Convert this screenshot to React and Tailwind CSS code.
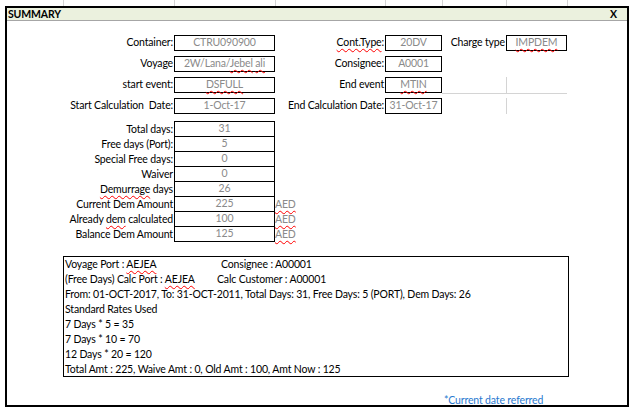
import React from "react";

const Wavy = ({ children }) => (
  <span className="underline decoration-wavy decoration-[#ff0000] decoration-1 underline-offset-[2px]">
    {children}
  </span>
);

const Label = ({ children, className = "" }) => (
  <div className={"flex items-center justify-end pr-[1px] whitespace-pre " + className}>
    <span>{children}</span>
  </div>
);

const Box = ({ children }) => (
  <div className="flex items-center justify-center border border-black text-[#8a8a8a] whitespace-pre">
    <span>{children}</span>
  </div>
);

export default function App() {
  const tableRows = [
    ["Total days:", "31", false],
    ["Free days (Port):", "5", false],
    ["Special Free days:", "0", false],
    ["Waiver", "0", false],
    [<><Wavy>Demurrage</Wavy>{" days"}</>, "26", false],
    ["Current Dem Amount", "225", true],
    [<>{"Already "}<Wavy>dem</Wavy>{" calculated"}</>, "100", true],
    ["Balance Dem Amount", "125", true],
  ];

  return (
    <div className="w-[635px] h-[413px] bg-white text-[10.5px] tracking-[-0.15px] leading-none text-black [font-family:Lato,'Open_Sans',sans-serif]">
      {/* spreadsheet gridlines above the box */}
      <div className="flex h-[6px]">
        <div className="w-[64px] border-r border-[#d4d4d4]" />
        <div className="w-[111px] border-r border-[#d4d4d4]" />
        <div className="w-[101px] border-r border-[#d4d4d4]" />
        <div className="w-[110px] border-r border-[#d4d4d4]" />
        <div className="w-[57px] border-r border-[#d4d4d4]" />
        <div className="w-[64px] border-r border-[#d4d4d4]" />
        <div className="w-[61px] border-r border-[#d4d4d4]" />
      </div>

      <div className="ml-[5px] w-[624px] h-[401px] border-2 border-black flex flex-col">
        {/* title bar */}
        <div className="h-[14px] bg-[#ebf1de] border-b border-[#a6a6a6] flex items-center justify-between pl-[1px] pr-[10px] font-bold">
          <span>SUMMARY</span>
          <span>X</span>
        </div>

        {/* header fields */}
        <div className="mt-[14px] grid grid-cols-[167px_101px_110px_57px_64px_61px] auto-rows-[16px] gap-y-[5px]">
          <Label>Container:</Label>
          <Box>CTRU090900</Box>
          <Label><Wavy>Cont.Type</Wavy>:</Label>
          <Box>20DV</Box>
          <Label>Charge type</Label>
          <Box><Wavy>IMPDEM</Wavy></Box>

          <Label>Voyage</Label>
          <Box>{"2W/Lana/"}<Wavy>Jebel</Wavy>{" "}<Wavy>ali</Wavy></Box>
          <Label>Consignee:</Label>
          <Box>A0001</Box>
          <div />
          <div />

          <Label>start event:</Label>
          <Box><Wavy>DSFULL</Wavy></Box>
          <Label>End event</Label>
          <Box><Wavy>MTIN</Wavy></Box>
          <div className="border-b border-[#d4d4d4] mb-[-1px]" />
          <div className="border-b border-l border-[#d4d4d4] mb-[-1px]" />

          <Label>{"Start Calculation  Date:"}</Label>
          <Box>1-Oct-17</Box>
          <Label>End Calculation Date:</Label>
          <Box>31-Oct-17</Box>
          <div />
          <div className="border-l border-[#d4d4d4]" />
        </div>

        {/* day / amount table */}
        <div className="mt-[7px] grid grid-cols-[167px_101px_60px]">
          <div className="h-[1px]" />
          <div className="h-[1px] bg-black" />
          <div className="h-[1px]" />
          {tableRows.map(([label, value, aed], i) => (
            <React.Fragment key={i}>
              <Label className="h-[15px]">{label}</Label>
              <div className="h-[15px] border-x border-b border-black flex items-center justify-center text-[#8a8a8a]">
                {value}
              </div>
              <div className="h-[15px] flex items-center text-[#8a8a8a]">
                {aed ? <Wavy>AED</Wavy> : null}
              </div>
            </React.Fragment>
          ))}
        </div>

        {/* detail text box */}
        <div className="mt-[14px] ml-[56px] w-[506px] h-[121px] border border-black pl-[1px] leading-[15px] flex flex-col">
          <div className="flex whitespace-pre">
            <span className="w-[156px]">{"Voyage Port : "}<Wavy>AEJEA</Wavy></span>
            <span>Consignee : A00001</span>
          </div>
          <div className="flex whitespace-pre">
            <span className="w-[152px]">{"(Free Days) Calc Port : "}<Wavy>AEJEA</Wavy></span>
            <span>Calc Customer : A00001</span>
          </div>
          <div className="whitespace-nowrap">From: 01-OCT-2017, To: 31-OCT-2011, Total Days: 31, Free Days: 5 (PORT), Dem Days: 26</div>
          <div>Standard Rates Used</div>
          <div>7 Days * 5 = 35</div>
          <div>7 Days * 10 = 70</div>
          <div>12 Days * 20 = 120</div>
          <div className="whitespace-nowrap">Total Amt : 225, Waive Amt : 0, Old Amt : 100, Amt Now : 125</div>
        </div>

        <div className="mt-[18px] pl-[437px] text-[#2a7ad0] whitespace-nowrap">*Current date referred</div>
      </div>
    </div>
  );
}
